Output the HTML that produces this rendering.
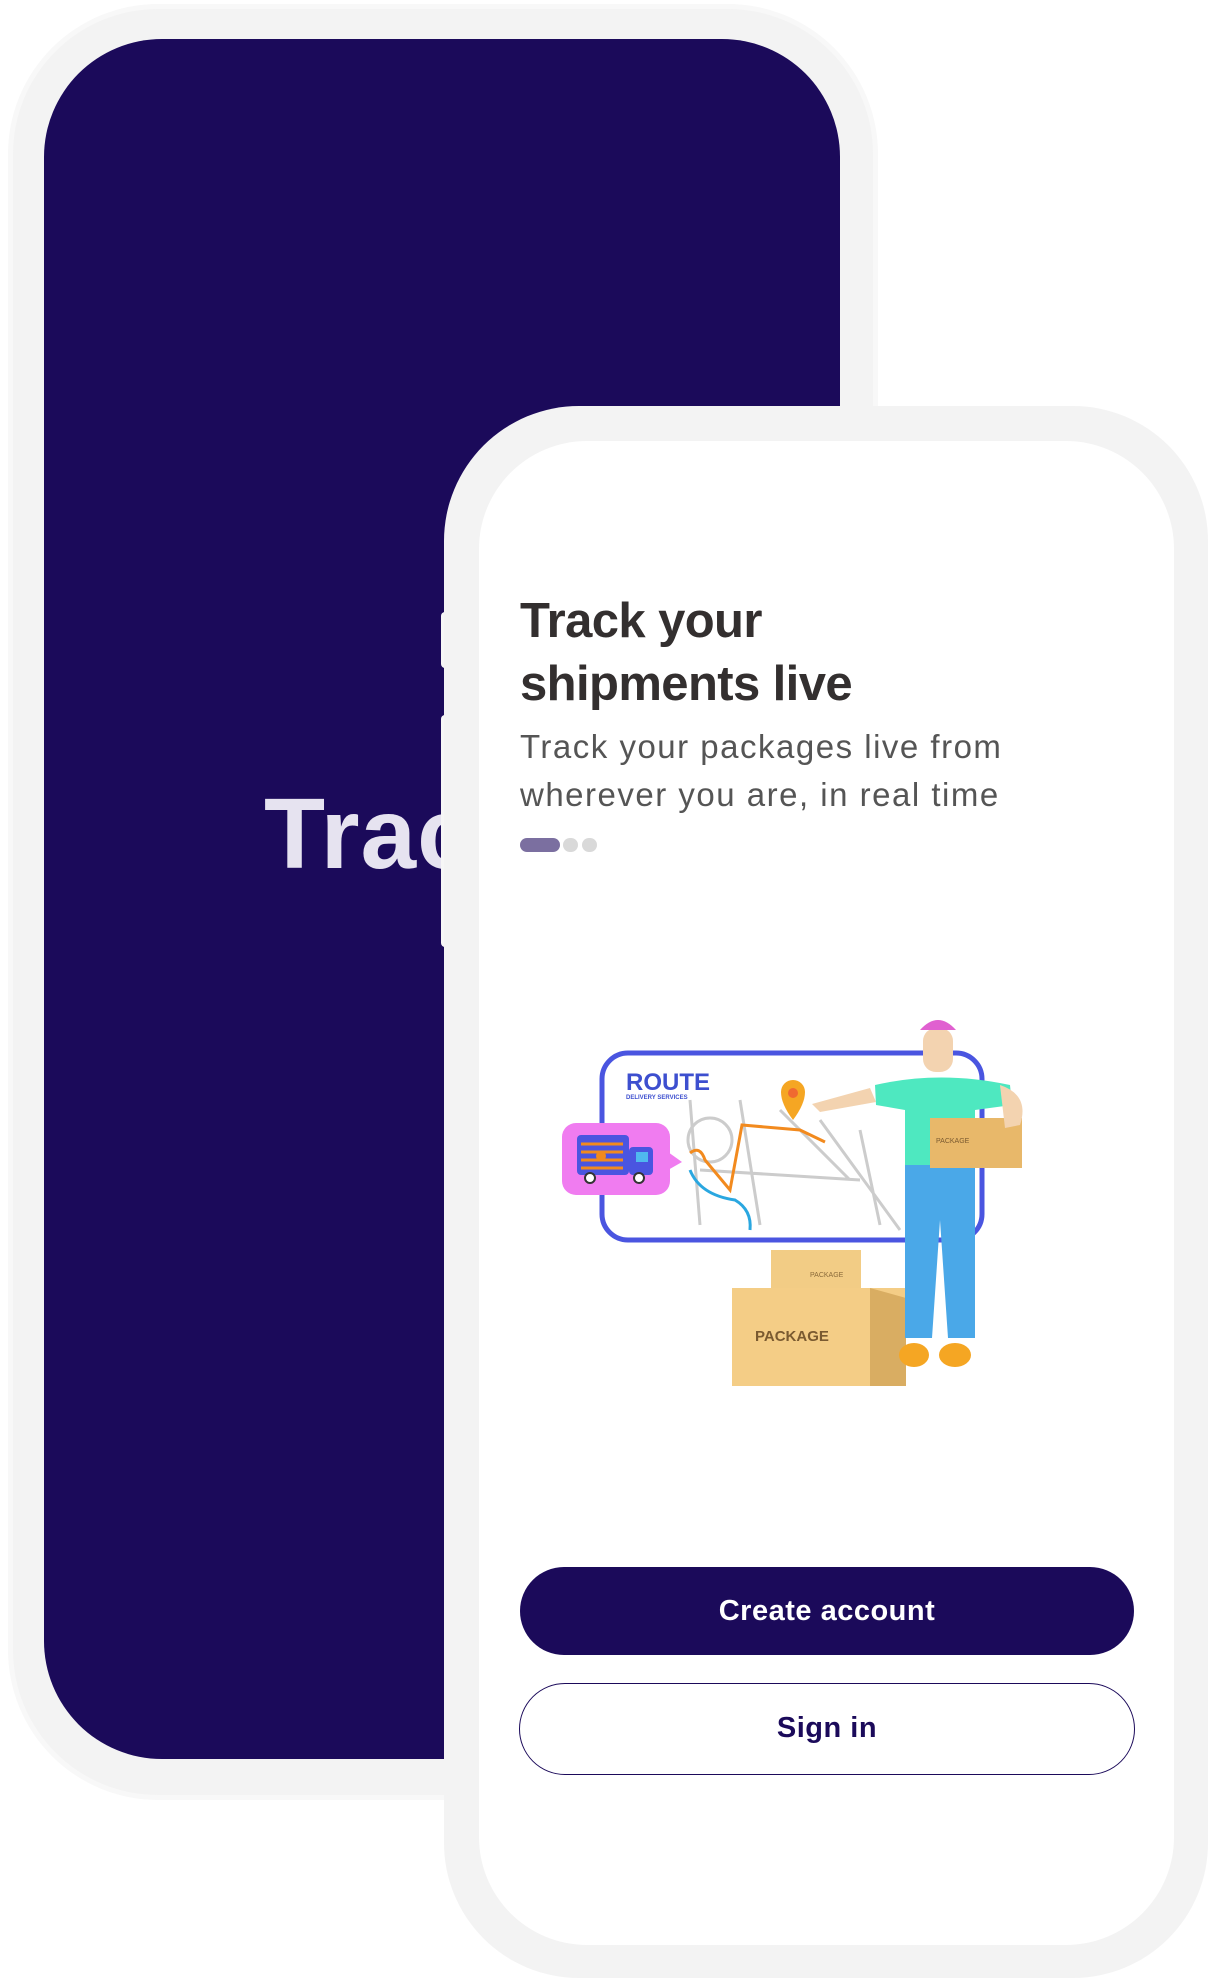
<!DOCTYPE html>
<html><head><meta charset="utf-8"><style>
*{margin:0;padding:0;box-sizing:border-box}
body{width:1212px;height:1980px;background:#fff;position:relative;overflow:hidden;font-family:"Liberation Sans",sans-serif}
.abs{position:absolute}
</style></head><body>
<!-- back phone -->
<div class="abs" style="left:8px;top:4px;width:870px;height:1796px;border-radius:150px;background:#f8f8f8"></div>
<div class="abs" style="left:13px;top:9px;width:860px;height:1786px;border-radius:145px;background:#f3f3f3"></div>
<div class="abs" style="left:44px;top:39px;width:796px;height:1720px;border-radius:118px;background:#1b0a5a;overflow:hidden">
<div class="abs" style="left:220px;top:745px;font-size:100px;font-weight:bold;color:#e6e3f0;letter-spacing:1px;line-height:1">Track</div>
</div>
<!-- front phone -->
<div class="abs" style="left:441px;top:612px;width:12px;height:56px;border-radius:4px;background:#f6f6f6"></div>
<div class="abs" style="left:441px;top:715px;width:12px;height:232px;border-radius:4px;background:#f6f6f6"></div>
<div class="abs" style="left:444px;top:406px;width:764px;height:1572px;border-radius:135px;background:#f3f3f3"></div>
<div class="abs" style="left:479px;top:441px;width:695px;height:1504px;border-radius:108px;background:#fff"></div>
<div class="abs" style="left:520px;top:590px;font-size:49px;font-weight:bold;color:#332f2f;line-height:63px;letter-spacing:-0.6px">Track your<br>shipments live</div>
<div class="abs" style="left:520px;top:723px;font-size:33px;color:#555;line-height:48px;white-space:nowrap;letter-spacing:1.5px">Track your packages live from<br>wherever you are, in real time</div>
<div class="abs" style="left:520px;top:838px;width:40px;height:14px;border-radius:7px;background:#7b6fa0"></div>
<div class="abs" style="left:563px;top:838px;width:15px;height:14px;border-radius:7px;background:#d9d9d9"></div>
<div class="abs" style="left:582px;top:838px;width:15px;height:14px;border-radius:7px;background:#d9d9d9"></div>
<!-- illustration -->
<svg class="abs" style="left:0;top:0" width="1212" height="1980">
<rect x="602" y="1053" width="380" height="187" rx="26" fill="#fff" stroke="#4a55e0" stroke-width="5"/>
<text x="626" y="1090" font-size="24" font-weight="bold" fill="#3d4fcf" font-family="Liberation Sans">ROUTE</text>
<text x="626" y="1099" font-size="6" font-weight="bold" fill="#3d4fcf" font-family="Liberation Sans">DELIVERY SERVICES</text>
<g fill="none" stroke="#ccc" stroke-width="3">
<circle cx="710" cy="1140" r="22"/><path d="M690 1100 L700 1225 M740 1100 L760 1225 M780 1110 L850 1180 M700 1170 L860 1180 M820 1120 L900 1230 M860 1130 L880 1225"/>
</g>
<path d="M690 1153 Q700 1145 705 1160 L730 1190 L742 1125 L800 1130 L825 1142" fill="none" stroke="#f28a1e" stroke-width="3"/>
<path d="M690 1170 Q700 1195 735 1200 Q752 1210 750 1230" fill="none" stroke="#2aa7e0" stroke-width="3"/>
<path d="M793 1080 a12 12 0 0 1 12 12 q0 12 -12 28 q-12 -16 -12 -28 a12 12 0 0 1 12 -12z" fill="#f5a623"/>
<circle cx="793" cy="1093" r="5" fill="#f06a30"/>
<rect x="562" y="1123" width="108" height="72" rx="14" fill="#f07cf0"/>
<path d="M668 1152 L682 1162 L668 1170z" fill="#f07cf0"/>
<rect x="577" y="1135" width="52" height="40" rx="4" fill="#4a55e0"/>
<rect x="629" y="1147" width="24" height="28" rx="4" fill="#4a55e0"/>
<rect x="636" y="1152" width="12" height="10" fill="#4fb8ef"/>
<g stroke="#f28a1e" stroke-width="3"><path d="M581 1144h42M581 1152h42M581 1160h42M581 1168h42"/></g>
<circle cx="601" cy="1156" r="5" fill="#f28a1e"/>
<circle cx="590" cy="1178" r="5" fill="#fff" stroke="#333" stroke-width="2"/>
<circle cx="639" cy="1178" r="5" fill="#fff" stroke="#333" stroke-width="2"/>
<!-- boxes -->
<rect x="771" y="1250" width="90" height="44" fill="#f2cc85"/>
<text x="810" y="1277" font-size="7" fill="#8a6a3a" font-family="Liberation Sans">PACKAGE</text>
<rect x="732" y="1288" width="174" height="98" fill="#f4cd86"/>
<path d="M870 1288 L906 1298 L906 1386 L870 1386z" fill="#d9ad62"/>
<text x="755" y="1341" font-size="15" font-weight="bold" fill="#7a5a30" font-family="Liberation Sans">PACKAGE</text>
<!-- person -->
<path d="M905 1160 L975 1160 L975 1338 L948 1338 L940 1220 L932 1338 L905 1338z" fill="#4aa8e8"/>
<ellipse cx="914" cy="1355" rx="15" ry="12" fill="#f5a623"/>
<ellipse cx="955" cy="1355" rx="16" ry="12" fill="#f5a623"/>
<path d="M875 1085 Q940 1070 1010 1085 L1012 1105 L975 1110 L975 1165 L905 1165 L905 1110 L876 1105z" fill="#4ee8c0"/>
<path d="M876 1102 L820 1112 L812 1104 L870 1088z" fill="#f3d3b0"/>
<rect x="923" y="1028" width="30" height="44" rx="13" fill="#f3d3b0"/>
<path d="M920 1030 Q938 1010 956 1030z" fill="#e060d0"/>
<rect x="930" y="1118" width="92" height="50" fill="#e8b86a"/>
<text x="936" y="1143" font-size="7" fill="#7a5a30" font-family="Liberation Sans">PACKAGE</text>
<path d="M1000 1085 Q1030 1095 1020 1125 L1005 1128z" fill="#f3d3b0"/>
</svg>
<!-- buttons -->
<div class="abs" style="left:520px;top:1567px;width:614px;height:88px;border-radius:44px;background:#1b0a5a;color:#fff;font-size:29px;font-weight:bold;text-align:center;line-height:88px;letter-spacing:0.5px">Create account</div>
<div class="abs" style="left:519px;top:1683px;width:616px;height:92px;border-radius:46px;border:1.5px solid #1b0a5a;color:#1b0a5a;font-size:29px;font-weight:bold;text-align:center;line-height:89px;letter-spacing:0.5px">Sign in</div>
</body></html>
